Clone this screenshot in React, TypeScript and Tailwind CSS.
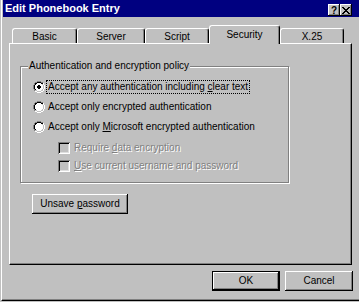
import type { ReactNode } from "react";

const radioRows = [
  "....DDDD....",
  "..DDKKKKDD..",
  ".DKKwwwwKKW.",
  ".DKwwwwwwLW.",
  "DKwwwwwwwwLW",
  "DKwwwwwwwwLW",
  "DKwwwwwwwwLW",
  "DKwwwwwwwwLW",
  ".DKwwwwwwLW.",
  ".DLLwwwwLLW.",
  "..WWLLLLWW..",
  "....WWWW....",
];

const dotRows = [
  "............",
  "............",
  "............",
  "............",
  ".....KK.....",
  "....KKKK....",
  "....KKKK....",
  ".....KK.....",
  "............",
  "............",
  "............",
  "............",
];

const closeRows = [
  "KK....KK",
  ".KK..KK.",
  "..KKKK..",
  "...KK...",
  "..KKKK..",
  ".KK..KK.",
  "KK....KK",
];

const palette: Record<string, string> = {
  D: "#808080",
  K: "#000000",
  W: "#ffffff",
  L: "#c0c0c0",
  w: "#ffffff",
};

function Pixels({ rows }: { rows: string[] }) {
  const w = rows[0].length;
  const h = rows.length;
  return (
    <svg width={w} height={h} viewBox={`0 0 ${w} ${h}`} shapeRendering="crispEdges" className="block">
      {rows.flatMap((row, y) =>
        row.split("").map((c, x) =>
          palette[c] ? <rect key={`${x}-${y}`} x={x} y={y} width={1} height={1} fill={palette[c]} /> : null,
        ),
      )}
    </svg>
  );
}

function Radio({ checked }: { checked?: boolean }) {
  return (
    <div className="relative h-[12px] w-[12px] shrink-0">
      <Pixels rows={radioRows} />
      {checked && (
        <div className="absolute inset-0">
          <Pixels rows={dotRows} />
        </div>
      )}
    </div>
  );
}

function RadioRow({ checked, focused, children }: { checked?: boolean; focused?: boolean; children: ReactNode }) {
  return (
    <div className="flex h-[20px] items-center pl-[12px]">
      <Radio checked={checked} />
      <div
        className={`ml-[1px] flex h-[14px] items-center px-[1px] border ${
          focused ? "border-dotted border-black" : "border-transparent"
        }`}
      >
        <span>{children}</span>
      </div>
    </div>
  );
}

function CheckRow({ children }: { children: ReactNode }) {
  return (
    <div className="flex h-[18px] items-center pl-[37px]">
      <div className="h-[12px] w-[12px] shrink-0 bg-[#c0c0c0] shadow-[inset_1px_1px_0_#808080,inset_-1px_-1px_0_#fff,inset_2px_2px_0_#000,inset_-2px_-2px_0_#dfdfdf]" />
      <span className="ml-[4px] text-[#808080] [text-shadow:1px_1px_0_#fff]">{children}</span>
    </div>
  );
}

const tabs = [
  { label: "Basic", w: "w-[65px]" },
  { label: "Server", w: "w-[68px]" },
  { label: "Script", w: "w-[64px]" },
  { label: "Security", w: "w-[71px]", active: true },
  { label: "X.25", w: "w-[64px]" },
];

const raised = "bg-[#c0c0c0] shadow-[inset_-1px_-1px_0_#000,inset_1px_1px_0_#fff,inset_-2px_-2px_0_#808080]";

export default function App() {
  return (
    <div className="h-[302px] w-[359px] overflow-hidden bg-[#c0c0c0] pl-px font-['Liberation_Sans',Arial,sans-serif] text-[10px] leading-none text-black">
      <div className="flex h-[301px] flex-col border-b border-l border-b-black border-l-white">
        <div className="flex h-[300px] flex-col border-b border-b-[#808080]">
          {/* title bar */}
          <div className="ml-px flex h-[17px] items-center justify-between bg-[#000080] pl-[2px] pr-[7px]">
            <span className="text-[11px] font-bold text-white">Edit Phonebook Entry</span>
            <div className="mt-[3px] flex">
              <div className={`flex h-[12px] w-[12px] items-center justify-center pt-px text-[10px] font-bold ${raised}`}>
                ?
              </div>
              <div className={`flex h-[12px] w-[12px] items-center justify-center ${raised}`}>
                <Pixels rows={closeRows} />
              </div>
            </div>
          </div>

          {/* tabs */}
          <div className="mt-[8px] flex h-[18px] items-end pl-[10px]">
            {tabs.map((t) => (
              <div
                key={t.label}
                className={`${t.w} flex justify-center rounded-t-[3px] border-l border-r border-t border-l-white border-r-black border-t-white bg-[#c0c0c0] shadow-[inset_-1px_0_0_#808080] ${
                  t.active ? "relative z-10 -mb-px h-[19px] pt-[4px]" : "h-[15px] pt-[3px]"
                }`}
              >
                {t.label}
              </div>
            ))}
          </div>

          {/* panel */}
          <div className="ml-[7px] flex h-[222px] w-[343px] flex-col border-b border-l border-r border-t border-b-black border-l-white border-r-black border-t-white shadow-[inset_-1px_-1px_0_#808080]">
            <div className="relative ml-[10px] mt-[22px] h-[117px] w-[269px] border border-[#808080] shadow-[1px_1px_0_#fff,inset_1px_1px_0_#fff]">
              <span className="absolute -top-[6px] left-[7px] bg-[#c0c0c0] px-px">
                Authentication and encryption policy
              </span>
              <div className="pt-[10px]">
                <RadioRow checked focused>
                  Accept any authentication including <span className="underline">c</span>lear text
                </RadioRow>
                <RadioRow>Accept only encrypted authentication</RadioRow>
                <RadioRow>
                  Accept only <span className="underline">M</span>icrosoft encrypted authentication
                </RadioRow>
                <div className="mt-[2px]">
                  <CheckRow>
                    Require <span className="underline">d</span>ata encryption
                  </CheckRow>
                  <CheckRow>
                    <span className="underline">U</span>se current username and password
                  </CheckRow>
                </div>
              </div>
            </div>

            <div className={`ml-[22px] mt-[11px] flex h-[20px] w-[96px] items-center justify-center ${raised}`}>
              <span>
                Unsave <span className="underline">p</span>assword
              </span>
            </div>
          </div>

          {/* footer buttons */}
          <div className="mt-[6px] flex justify-end gap-[5px] pr-[6px]">
            <div className={`flex h-[20px] w-[68px] items-center justify-center border border-black ${raised}`}>
              OK
            </div>
            <div className={`flex h-[20px] w-[68px] items-center justify-center ${raised}`}>Cancel</div>
          </div>
        </div>
      </div>
    </div>
  );
}
